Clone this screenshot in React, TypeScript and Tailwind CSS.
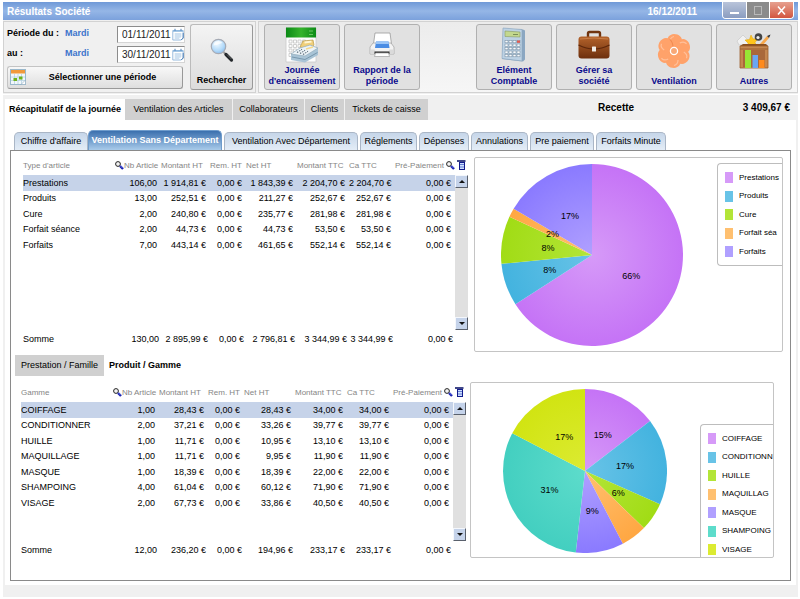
import { useState } from "react";
import type { ReactNode } from "react";

type Row = { name: string; values: string[] };
type Slice = { label: string; amount: number; tone: Tone; hideShare?: boolean };
type Tone = "purple" | "blue" | "green" | "orange" | "violet" | "teal" | "yellow";

const TONES: Record<Tone, [string, string]> = {
  purple: ["#d69af8", "#c573f6"],
  blue: ["#68c3e7", "#43b3df"],
  green: ["#b3e538", "#a1dc15"],
  orange: ["#ffc070", "#ffa742"],
  violet: ["#b0a0ff", "#8a7aff"],
  teal: ["#5ddccb", "#43cfc0"],
  yellow: ["#dceb32", "#d1e412"],
};

const HEADERS = ["Nb Article", "Montant HT", "Rem. HT", "Net HT", "Montant TTC", "Ca TTC"];

const FAMILIES: Row[] = [
  { name: "Prestations", values: ["106,00", "1 914,81 €", "0,00 €", "1 843,39 €", "2 204,70 €", "2 204,70 €", "0,00 €"] },
  { name: "Produits", values: ["13,00", "252,51 €", "0,00 €", "211,27 €", "252,67 €", "252,67 €", "0,00 €"] },
  { name: "Cure", values: ["2,00", "240,80 €", "0,00 €", "235,77 €", "281,98 €", "281,98 €", "0,00 €"] },
  { name: "Forfait séance", values: ["2,00", "44,73 €", "0,00 €", "44,73 €", "53,50 €", "53,50 €", "0,00 €"] },
  { name: "Forfaits", values: ["7,00", "443,14 €", "0,00 €", "461,65 €", "552,14 €", "552,14 €", "0,00 €"] },
];
const FAMILIES_SUM = ["130,00", "2 895,99 €", "0,00 €", "2 796,81 €", "3 344,99 €", "3 344,99 €", "0,00 €"];

const RANGES: Row[] = [
  { name: "COIFFAGE", values: ["1,00", "28,43 €", "0,00 €", "28,43 €", "34,00 €", "34,00 €", "0,00 €"] },
  { name: "CONDITIONNER", values: ["2,00", "37,21 €", "0,00 €", "33,26 €", "39,77 €", "39,77 €", "0,00 €"] },
  { name: "HUILLE", values: ["1,00", "11,71 €", "0,00 €", "10,95 €", "13,10 €", "13,10 €", "0,00 €"] },
  { name: "MAQUILLAGE", values: ["1,00", "11,71 €", "0,00 €", "9,95 €", "11,90 €", "11,90 €", "0,00 €"] },
  { name: "MASQUE", values: ["1,00", "18,39 €", "0,00 €", "18,39 €", "22,00 €", "22,00 €", "0,00 €"] },
  { name: "SHAMPOING", values: ["4,00", "61,04 €", "0,00 €", "60,12 €", "71,90 €", "71,90 €", "0,00 €"] },
  { name: "VISAGE", values: ["2,00", "67,73 €", "0,00 €", "33,86 €", "40,50 €", "40,50 €", "0,00 €"] },
];
const RANGES_SUM = ["12,00", "236,20 €", "0,00 €", "194,96 €", "233,17 €", "233,17 €", "0,00 €"];

const FAMILY_SLICES: Slice[] = [
  { label: "Prestations", amount: 1843.39, tone: "purple" },
  { label: "Produits", amount: 211.27, tone: "blue" },
  { label: "Cure", amount: 235.77, tone: "green" },
  { label: "Forfait séa", amount: 44.73, tone: "orange" },
  { label: "Forfaits", amount: 461.65, tone: "violet" },
];
const RANGE_SLICES: Slice[] = [
  { label: "COIFFAGE", amount: 28.43, tone: "purple" },
  { label: "CONDITIONN", amount: 33.26, tone: "blue" },
  { label: "HUILLE", amount: 10.95, tone: "green" },
  { label: "MAQUILLAG", amount: 9.95, tone: "orange", hideShare: true },
  { label: "MASQUE", amount: 18.39, tone: "violet" },
  { label: "SHAMPOING", amount: 60.12, tone: "teal" },
  { label: "VISAGE", amount: 33.86, tone: "yellow" },
];

/* ---------- small icons ---------- */

function Lens() {
  return (
    <svg width="9" height="9" viewBox="0 0 9 9" className="shrink-0">
      <circle cx="3" cy="3" r="2.4" fill="#f4f4f4" stroke="#222" />
      <path d="M5 5l3 3" stroke="#1a22b0" strokeWidth="2.4" />
      <path d="M5.6 5l2 2" stroke="#6f7cf0" strokeWidth=".8" />
    </svg>
  );
}

function Columns() {
  return (
    <svg width="9" height="10" viewBox="0 0 9 10" className="shrink-0">
      <path d="M0 1h8.500" stroke="#111a6c" strokeWidth="1.600" />
      <rect x="2.500" y="2.500" width="5" height="7" fill="#cfe0ff" stroke="#111a8c" />
      <path d="M3 4.500h4M3 7h4" stroke="#4a66c8" strokeWidth=".8" />
    </svg>
  );
}

function CalendarGlyph() {
  return (
    <svg width="12" height="13" viewBox="0 0 12 13">
      <path d="M.8 2.500h10.400v7.500l-2 2H.8z" fill="#fff" stroke="#8db3da" strokeWidth=".9" />
      <path d="M1 2h10v1.800H1z" fill="#8fb9e0" />
      <path d="M2.500 6h7M2.500 8h7M2.500 10h5M4 5v6M6 5v6M8 5v5" stroke="#b4d0ea" strokeWidth=".8" />
      <path d="M3 .8v2M9 .8v2" stroke="#4d7fb5" />
      <path d="M11.200 5v5l-2 2" fill="none" stroke="#4d7fb5" />
    </svg>
  );
}

function PeriodIcon() {
  return (
    <svg width="17" height="17" viewBox="0 0 17 17" className="shrink-0">
      <rect x=".5" y=".5" width="15" height="15" fill="#f1f7fb" stroke="#9ab8cc" />
      <path d="M1 1h14v3.500H1z" fill="#f09a3c" />
      <path d="M1 8h14M1 11.500h14M4.500 5v10M8 5v10M11.500 5v10" stroke="#b7d2e2" strokeWidth=".8" />
      <path d="M3.500 9h3.500v3H3.500zM9 7.500h3.500v3H9z" fill="#6fb31c" />
      <path d="M15.500 11v4.500H11z" fill="#fff" stroke="#8aa8bc" strokeWidth=".6" />
    </svg>
  );
}

function SearchIcon() {
  return (
    <svg width="24" height="26" viewBox="0 0 24 26">
      <defs>
        <radialGradient id="glass" cx=".4" cy=".3" r=".8">
          <stop offset="0" stopColor="#f2faff" />
          <stop offset=".6" stopColor="#b4dbfa" />
          <stop offset="1" stopColor="#7fb4ea" />
        </radialGradient>
      </defs>
      <path d="M13.500 15l3 3" stroke="#9a9a9a" strokeWidth="2" />
      <path d="M16 17.500l5.500 5.500" stroke="#23272b" strokeWidth="3.200" strokeLinecap="round" />
      <path d="M17 17.500l4.500 4.500" stroke="#777" strokeWidth=".8" />
      <circle cx="8.500" cy="9.500" r="7.200" fill="url(#glass)" stroke="#a5aab4" strokeWidth="1.200" />
      <path d="M3.500 8.500a5 5 0 0 1 9-2.500c-3 0-5 2.500-9 2.500z" fill="#fff" opacity=".7" />
    </svg>
  );
}

function RegisterIcon() {
  return (
    <svg width="34" height="38" viewBox="0 0 34 38">
      <defs>
        <linearGradient id="leaf" x1="0" y1="0" x2="1" y2="0">
          <stop offset="0" stopColor="#0b8a16" />
          <stop offset=".5" stopColor="#35b32c" />
          <stop offset="1" stopColor="#0c8b17" />
        </linearGradient>
      </defs>
      <path d="M1 2h30v34H1z" fill="#fdfdfd" stroke="#c9c9c9" strokeWidth=".8" />
      <path d="M1 1.500h30v10H1z" fill="url(#leaf)" />
      <path d="M24 5h4M24 8.500h4" stroke="#7fd074" strokeWidth=".8" />
      <g fill="none" stroke="#c4c4c4" strokeWidth=".8">
        <path d="M4 14h3v3H4zM8.500 14h3v3h-3zM13 14h3v3h-3zM17.500 14h3v3h-3zM4 18.500h3v3H4zM8.500 18.500h3v3h-3zM13 18.500h3v3h-3zM4 23h3v3H4zM8.500 23h3v3h-3zM4 27.500h3v3H4z" />
      </g>
      <path d="M15 21l3-6 10-1 1 5-3 4z" fill="#f0cf7a" stroke="#b89a4c" strokeWidth=".7" />
      <path d="M19.500 16.500l7-.8" stroke="#fff6d4" strokeWidth="1.800" />
      <path d="M6 28l9-6 10-3 8 3v7l-13 7.500L6 34z" fill="#a9c4d6" />
      <path d="M6 28l9-6 10-3 8 3-13 8z" fill="#edf4f8" stroke="#8ba5b6" strokeWidth=".6" />
      <path d="M12 26.500l5-3.200M15 27.500l5-3.200M18 28.500l5-3.200" stroke="#5d6e7c" strokeWidth="1.100" strokeDasharray="1.500 1" />
      <path d="M21 23l7-2" stroke="#f5d98e" strokeWidth="1.500" />
      <path d="M7 31l13 2.500 12.500-7" fill="none" stroke="#6b8ca2" strokeWidth=".8" />
    </svg>
  );
}

function PrinterIcon() {
  return (
    <svg width="26" height="26" viewBox="0 0 26 26">
      <path d="M6 1h15l1.500 11h-18z" fill="#fff" stroke="#9a9a9a" strokeWidth=".8" />
      <path d="M4 11h18l3 4v7H1v-7z" fill="#f3f3f3" stroke="#a8a8a8" strokeWidth=".8" />
      <path d="M7 9.500h12.500l1 6.500H6z" fill="#4b8de4" />
      <path d="M7 9.500h12.500l.4 2.500H6.700z" fill="#9cc6f7" />
      <path d="M1.500 17.500h4l1 2h13l1-2h4V22h-23z" fill="#dadada" />
      <path d="M5.500 19.500h15V22h-15z" fill="#2c2c2c" />
      <path d="M6.500 21h13l1 3.500h-15z" fill="#fff" stroke="#a0a0a0" strokeWidth=".7" />
    </svg>
  );
}

function CalculatorIcon() {
  return (
    <svg width="26" height="36" viewBox="0 0 26 36">
      <path d="M2 1.500L22 2.500l2 1v29l-2 2L1 32z" fill="#8ba7c2" />
      <path d="M2 1l19 1.500V34L1 31.500z" fill="#bdd2e4" stroke="#8aa4bd" strokeWidth=".6" />
      <path d="M4 4l15 1v5L4 9.500z" fill="#c3d88e" stroke="#8a9c62" strokeWidth=".6" />
      <path d="M12 7.500h5" stroke="#7b8f58" />
      <g fill="#f7fafc" stroke="#71879c" strokeWidth=".5">
        {[0, 1, 2, 3, 4].map((r) =>
          [0, 1, 2, 3].map((c) => <rect key={`${r}${c}`} x={4 + c * 4} y={13.5 + r * 3.5} width="3" height="2.300" />)
        )}
      </g>
      <path d="M16 13.500h3v2.300h-3z" fill="#e05a50" />
    </svg>
  );
}

function BriefcaseIcon() {
  return (
    <svg width="34" height="30" viewBox="0 0 34 30">
      <defs>
        <linearGradient id="leather" x1="0" y1="0" x2="0" y2="1">
          <stop offset="0" stopColor="#b4632b" />
          <stop offset="1" stopColor="#6d2f0d" />
        </linearGradient>
      </defs>
      <path d="M11 7V3.500Q11 2 12.500 2h9Q23 2 23 3.500V7" fill="none" stroke="#70340f" strokeWidth="2.400" />
      <rect x="1.500" y="6.500" width="31" height="22" rx="3" fill="url(#leather)" />
      <path d="M1.500 15q15.500 8 31 0" fill="none" stroke="#5c260a" strokeWidth="1.200" />
      <path d="M3 9q14-2 28 0" fill="none" stroke="#cf8650" strokeWidth=".8" />
      <rect x="15" y="16.500" width="4" height="5" rx=".6" fill="#f1ece6" />
    </svg>
  );
}

function FanIcon() {
  return (
    <svg width="36" height="36" viewBox="0 0 36 36">
      {[0, 60, 120, 180, 240, 300].map((a) => (
        <g key={a} transform={`rotate(${a} 18 18)`}>
          <path d="M18 18L12.500 10C10 5 13 1.500 18 1c5 .2 8.500 3 8 7.500-.5 3-4 6-8 9.500z" fill="#ffa26a" />
          <path d="M26 8.500c-.5 3-3 5.500-6 7.500" stroke="#f08a50" strokeWidth="1" fill="none" />
          <path d="M14 9c0-3 1.500-5 4-5.500" stroke="#ffc09a" strokeWidth="1.200" fill="none" />
        </g>
      ))}
      <circle cx="18" cy="18" r="5" fill="#ff9e64" />
      <circle cx="18" cy="18" r="3.600" fill="#f8a877" stroke="#fff" strokeWidth="1.300" />
    </svg>
  );
}

function CrateIcon() {
  return (
    <svg width="36" height="38" viewBox="0 0 36 38">
      <path d="M1 9l6-6 4 4 2 6H3z" fill="#f1f1f1" stroke="#c4c4c4" strokeWidth=".6" />
      <path d="M15 3l2 4 5-.5-3 4 2 4-5-1.500-4 2V11l-3-3 4.500-.5z" fill="#ffc51c" stroke="#e5a200" strokeWidth=".5" />
      <circle cx="22.500" cy="5" r="3.800" fill="#444" />
      <circle cx="22" cy="5.500" r="1.600" fill="#eee" />
      <path d="M23 13l8-9 2 2-7 8z" fill="#f7a84c" />
      <path d="M31 4l2 2 1.500-3.500z" fill="#333" />
      <path d="M4 14l3-2h23l2 2z" fill="#8a4f1f" />
      <path d="M4 14h28v22H4z" fill="#c58750" stroke="#9a5e2c" strokeWidth=".8" />
      <path d="M7 18h22v17H7z" fill="#a9683a" />
      <path d="M4 17h28" stroke="#9a5e2c" />
      <path d="M9 18h6v18H9z" fill="#98e634" />
      <path d="M16.500 23h5.500v13h-5.500z" fill="#6aa6f2" />
      <path d="M23 28h5.500v8H23z" fill="#ff8a1c" />
    </svg>
  );
}

/* ---------- building blocks ---------- */

function ToolButton({ icon, lines }: { icon: ReactNode; lines: string[] }) {
  return (
    <button className="flex h-[66px] w-[76px] flex-col items-center rounded-[3px] border border-[#b0b0b0] bg-[#e1e1e1] pb-[2px] text-[9px] leading-[11px] font-bold text-[#0a0a8c]">
      <span className="flex flex-1 items-center">{icon}</span>
      {lines.map((line) => (
        <span key={line} className="whitespace-nowrap">{line}</span>
      ))}
    </button>
  );
}

function DateField({ id, label, value }: { id: string; label: string; value: string }) {
  return (
    <div className="flex h-[20px] items-center">
      <label htmlFor={id} className="w-[58px]">{label}</label>
      <span className="w-[52px] text-[#3d74cc]">Mardi</span>
      <div className="flex h-[17px] w-[68px] items-center border border-[#d5d5d5] border-t-[#8c8c8c] border-l-[#8c8c8c] bg-white">
        <input id={id} defaultValue={value} className="w-[54px] min-w-0 pl-1 text-[10px] font-normal text-[#222] outline-none" />
        <button aria-label="Calendrier"><CalendarGlyph /></button>
      </div>
    </div>
  );
}

function ScrollBar() {
  const knob = "flex h-[13px] items-center justify-center border border-[#f4f7fc] border-r-[#59606c] border-b-[#59606c] bg-[#c5d3ea]";
  return (
    <div className="flex flex-1 flex-col justify-between bg-[#e0e0e0]">
      <button aria-label="Monter" className={knob}>
        <svg width="6" height="3" viewBox="0 0 6 3"><path d="M0 3l3-3 3 3z" fill="#111" /></svg>
      </button>
      <button aria-label="Descendre" className={knob}>
        <svg width="6" height="3" viewBox="0 0 6 3"><path d="M0 0l3 3 3-3z" fill="#111" /></svg>
      </button>
    </div>
  );
}

function DataTable({ title, rows, sum, gap }: { title: string; rows: Row[]; sum: string[]; gap: string }) {
  const [selected, setSelected] = useState(0);
  return (
    <div className="flex shrink-0 self-start">
      <table className="w-[432px] table-fixed border-collapse text-[9px] leading-[11px] whitespace-nowrap">
        <colgroup>
          <col className="w-[101px]" />
          <col className="w-[37px]" />
          <col className="w-[49px]" />
          <col className="w-[36px]" />
          <col className="w-[51px]" />
          <col className="w-[52px]" />
          <col className="w-[46px]" />
          <col className="w-[60px]" />
        </colgroup>
        <thead className="text-left text-[8px] text-[#858585]">
          <tr className="h-[20px]">
            <th className="p-0 font-normal">
              <span className="flex items-center justify-between">{title}<Lens /></span>
            </th>
            {HEADERS.map((h) => (
              <th key={h} className="p-0 font-normal">{h}</th>
            ))}
            <th className="p-0 font-normal">
              <span className="flex items-center gap-[2px]">Pré-Paiement<Lens /></span>
            </th>
          </tr>
        </thead>
        <tbody>
          {rows.map((row, i) => (
            <tr key={row.name} onClick={() => setSelected(i)} className={i === selected ? "odd:h-[16px] even:h-[15px] bg-[#c6d3e9]" : "odd:h-[16px] even:h-[15px]"}>
              <td className="p-0">{row.name}</td>
              {row.values.map((v, c) => (
                <td key={c} className="p-0 pr-1 text-right">{v}</td>
              ))}
            </tr>
          ))}
        </tbody>
        <tfoot>
          <tr className={gap}><td colSpan={8} className="p-0" /></tr>
          <tr className="h-[16px]">
            <td className="p-0">Somme</td>
            {sum.map((v, c) => (
              <td key={c} className="p-0 pr-[2px] text-right">{v}</td>
            ))}
          </tr>
        </tfoot>
      </table>
      <div className="flex w-[13px] flex-col pb-[17px]">
        <span className="flex h-[20px] items-center justify-center"><Columns /></span>
        <ScrollBar />
      </div>
    </div>
  );
}

function Pie({ id, slices, radius }: { id: string; slices: Slice[]; radius: number }) {
  const total = slices.reduce((s, x) => s + x.amount, 0);
  const at = (share: number, r: number): [number, number] => [
    radius + r * Math.sin(share * 2 * Math.PI),
    radius - r * Math.cos(share * 2 * Math.PI),
  ];
  let start = 0;
  const parts = slices.map((slice) => {
    const share = slice.amount / total;
    const from = start;
    start += share;
    const [x1, y1] = at(from, radius);
    const [x2, y2] = at(start, radius);
    return {
      slice,
      share,
      d: `M${radius} ${radius}L${x1} ${y1}A${radius} ${radius} 0 ${share > 0.5 ? 1 : 0} 1 ${x2} ${y2}Z`,
      label: at(from + share / 2, radius * 0.49),
    };
  });
  return (
    <svg width={radius * 2} height={radius * 2} className="shrink-0" role="img">
      <defs>
        {slices.map(({ tone }) => (
          <radialGradient key={tone} id={id + tone} gradientUnits="userSpaceOnUse" cx={radius} cy={radius} r={radius}>
            <stop offset="0" stopColor={TONES[tone][0]} />
            <stop offset="1" stopColor={TONES[tone][1]} />
          </radialGradient>
        ))}
      </defs>
      {parts.map((p) => (
        <path key={p.slice.label} d={p.d} fill={`url(#${id + p.slice.tone})`} />
      ))}
      {parts.filter((p) => !p.slice.hideShare).map((p) => (
        <text key={p.slice.label} x={p.label[0]} y={p.label[1] + 3} textAnchor="middle" className="fill-black text-[9px]">
          {Math.round(p.share * 100) + "%"}
        </text>
      ))}
    </svg>
  );
}

function Legend({ slices, className }: { slices: Slice[]; className: string }) {
  return (
    <ul className={"ml-auto overflow-hidden rounded-l-[4px] border border-r-0 border-[#bdbdbd] pt-1 pl-[7px] text-[8px] " + className}>
      {slices.map((s) => (
        <li key={s.label} className="flex items-center gap-[6px] whitespace-nowrap odd:h-[19px] even:h-[18px]">
          <span className="h-[11px] w-[8px] shrink-0" style={{ background: TONES[s.tone][0] }} />
          {s.label}
        </li>
      ))}
    </ul>
  );
}

const MAIN_TABS = [
  { label: "Ventilation des Articles", width: "w-[107px]" },
  { label: "Collaborateurs", width: "w-[71px]" },
  { label: "Clients", width: "w-[39px]" },
  { label: "Tickets de caisse", width: "w-[83px]" },
];

const SUB_TABS = [
  { label: "Chiffre d'affaire", width: "w-[74px]" },
  { label: "Ventilation Sans Département", width: "w-[134px]", active: true },
  { label: "Ventilation Avec Département", width: "w-[134px]" },
  { label: "Réglements", width: "w-[57px]" },
  { label: "Dépenses", width: "w-[50px]" },
  { label: "Annulations", width: "w-[57px]" },
  { label: "Pre paiement", width: "w-[64px]" },
  { label: "Forfaits Minute", width: "w-[70px]" },
];

export default function App() {
  return (
    <div className="min-w-[800px] bg-white pt-[2px] pr-[2px] pb-[2px] pl-[3px] font-['Liberation_Sans',Arial,sans-serif] text-black">
      <header className="flex h-[18px] items-center bg-linear-to-b from-[#6f99d8] via-[#95b6e6] to-[#7ba1dc] pl-1 text-[10px] font-bold text-white">
        <h1>Résultats Société</h1>
        <time className="mr-[25px] ml-auto">16/12/2011</time>
        <div className="mr-1 flex h-[17px] w-[72px] self-start overflow-hidden rounded-b-[4px] border border-t-0 border-white">
          <button aria-label="Réduire" className="flex flex-1 items-end justify-center bg-linear-to-b from-[#b9c4da] to-[#8b9dc0] pb-[4px]">
            <span className="h-[2px] w-[9px] bg-white" />
          </button>
          <button aria-label="Agrandir" className="flex flex-1 items-center justify-center border-x border-white bg-[#8b8b8b]">
            <span className="h-[9px] w-[8px] border border-[#b9b9b9]" />
          </button>
          <button aria-label="Fermer" className="flex flex-1 items-center justify-center bg-linear-to-b from-[#e6a08f] to-[#d2553f]">
            <svg width="9" height="9" viewBox="0 0 9 9"><path d="M1 .5l7 8M8 .5l-7 8" stroke="#fff" strokeWidth="1.500" /></svg>
          </button>
        </div>
      </header>

      <div className="bg-[#f0f0f0] px-[2px] pb-[12px]">
        <div className="-mx-[2px] flex gap-[2px] pt-[1px]">
          <form className="flex h-[72px] w-[253px] shrink-0 border border-[#d2d2d2] pt-[2px] pl-[3px]" onSubmit={(e) => e.preventDefault()}>
            <div className="w-[183px] text-[9px] font-bold">
              <DateField id="from" label="Période du :" value="01/11/2011" />
              <DateField id="to" label="au :" value="30/11/2011" />
              <button className="mt-[2px] flex h-[23px] w-[176px] items-center rounded-[3px] border border-[#c4c4c4] border-r-[#999] border-b-[#999] bg-linear-to-b from-[#f8f8f8] to-[#dedede] pl-[2px]">
                <PeriodIcon />
                <span className="flex-1 pr-1 text-center">Sélectionner une période</span>
              </button>
            </div>
            <button className="flex h-[66px] w-[63px] flex-col items-center rounded-[3px] border border-[#bbb] border-r-[#999] border-b-[#999] bg-linear-to-b from-[#f4f4f4] to-[#dcdcdc] pb-[3px] text-[9px] leading-[11px] font-bold">
              <span className="flex flex-1 items-center"><SearchIcon /></span>
              Rechercher
            </button>
          </form>
          <nav className="flex h-[72px] flex-1 gap-1 border border-[#d2d2d2] bg-linear-to-b from-[#ececec] to-[#f6f6f6] px-[5px] pt-[2px]">
            <ToolButton icon={<RegisterIcon />} lines={["Journée", "d'encaissement"]} />
            <ToolButton icon={<PrinterIcon />} lines={["Rapport de la", "période"]} />
            <div className="ml-auto flex gap-1">
              <ToolButton icon={<CalculatorIcon />} lines={["Elément", "Comptable"]} />
              <ToolButton icon={<BriefcaseIcon />} lines={["Gérer sa", "société"]} />
              <ToolButton icon={<FanIcon />} lines={["Ventilation"]} />
              <ToolButton icon={<CrateIcon />} lines={["Autres"]} />
            </div>
          </nav>
        </div>

        <div className="-mx-[2px] mt-[1px] h-[1px] bg-white" />

        <div className="mt-[4px] flex h-[21px] text-[9px]">
          <button className="w-[120px] bg-white font-bold whitespace-nowrap">Récapitulatif de la journée</button>
          <div className="flex gap-[1px]">
            {MAIN_TABS.map((t) => (
              <button key={t.label} className={"bg-[#d0d0d0] whitespace-nowrap " + t.width}>{t.label}</button>
            ))}
          </div>
          <div className="ml-auto flex w-[198px] justify-between pr-[6px] text-[10px] leading-[18px] font-bold">
            <span>Recette</span>
            <span>3 409,67 €</span>
          </div>
        </div>

        <main className="bg-white px-[5px] pt-[10px] pb-[4px]">
          <div className="flex h-[20px] items-end gap-[2px] pl-1 text-[9px]">
            {SUB_TABS.map((t) => (
              <button
                key={t.label}
                className={
                  (t.active
                    ? "-ml-[2px] h-[20px] border-[#6f9ccc] bg-linear-to-b from-[#3b70ae] to-[#a9cbea] font-bold text-white "
                    : "h-[18px] border-[#aab6c6] bg-linear-to-b from-[#c6d6e9] to-[#e4edf7] ") +
                  "shrink-0 rounded-t-[5px] border border-b-0 whitespace-nowrap " +
                  t.width
                }
              >
                {t.label}
              </button>
            ))}
          </div>

          <section className="border border-[#8a8a8a] pb-[22px]">
            <div className="flex pt-[4px] pr-[7px] pl-[12px]">
              <DataTable title="Type d'article" rows={FAMILIES} sum={FAMILIES_SUM} gap="h-[78px]" />
              <figure className="mt-[2px] ml-[6px] flex h-[195px] flex-1 items-start overflow-hidden rounded-[2px] border border-[#c4c4c4] pt-[6px] pl-[26px]">
                <Pie id="family-" slices={FAMILY_SLICES} radius={91} />
                <Legend slices={FAMILY_SLICES} className="-mt-[1px] h-[103px] w-[65px]" />
              </figure>
            </div>

            <div className="mt-[3px] flex h-[21px] pl-1 text-[9px]">
              <button className="w-[89px] bg-[#d0d0d0]">Prestation / Famille</button>
              <button className="px-[5px] font-bold">Produit / Gamme</button>
            </div>

            <div className="mt-[6px] flex pr-[16px] pl-[10px]">
              <DataTable title="Gamme" rows={RANGES} sum={RANGES_SUM} gap="h-[31px]" />
              <figure className="flex h-[176px] flex-1 items-start overflow-hidden rounded-[2px] border border-[#c4c4c4] pt-[6px] pl-[32px] ml-[4px]">
                <Pie id="range-" slices={RANGE_SLICES} radius={82} />
                <Legend slices={RANGE_SLICES} className="mt-[35px] h-[140px] w-[73px]" />
              </figure>
            </div>
          </section>
        </main>
      </div>
    </div>
  );
}
